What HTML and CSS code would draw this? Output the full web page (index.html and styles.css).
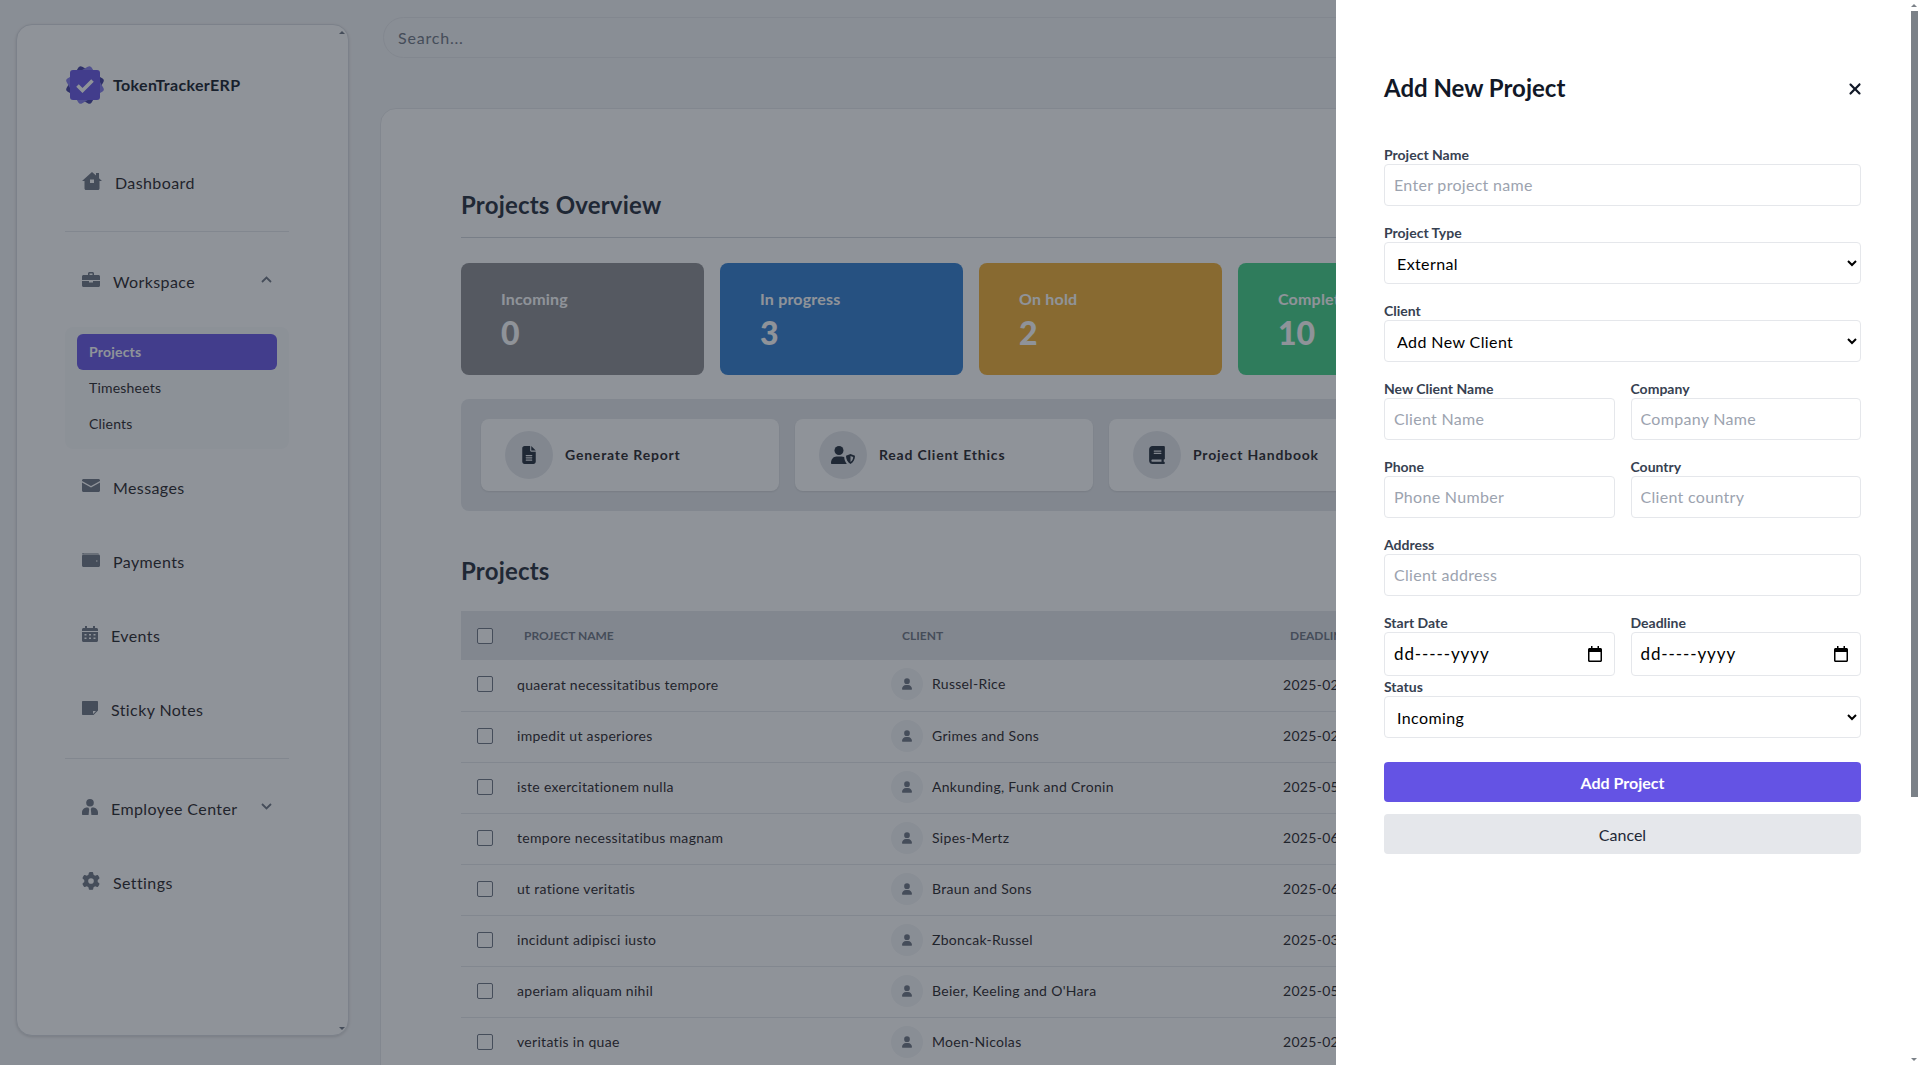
FILE: index.html
```html
<!DOCTYPE html>
<html lang="en">
<head>
  <meta charset="UTF-8" />
  <title>TokenTrackerERP - Projects</title>
  <link rel="stylesheet" href="styles.css">
</head>
<body>
  <svg class="defs" width="0" height="0">
    <symbol id="i-user" viewBox="0 0 448 512"><path d="M224 256A128 128 0 1 0 224 0a128 128 0 1 0 0 256zm-45.7 48C79.8 304 0 383.8 0 482.3C0 498.7 13.3 512 29.7 512H418.3c16.4 0 29.7-13.3 29.7-29.7C448 383.8 368.2 304 269.7 304H178.3z"/></symbol>
  </svg>

  <div class="app">
    <aside class="sidebar">
      <span class="bar-arrow bar-arrow-up"></span>
      <span class="bar-arrow bar-arrow-down"></span>

      <div class="logo">
        <svg class="logo-mark" width="40" height="40" viewBox="0 0 40 40">
          <rect x="5.500" y="5.500" width="29" height="29" rx="3" fill="#3f3a9e" transform="rotate(30 20 20)"/>
          <rect x="5.500" y="5.500" width="29" height="29" rx="3" fill="#8078ea" transform="rotate(60 20 20)"/>
          <rect x="5" y="5" width="30" height="30" rx="3" fill="#6453e4"/>
          <path d="M12.500 20.500l5 5 10-10" fill="none" stroke="#fff" stroke-width="3.600"/>
        </svg>
        <span class="logo-text">TokenTrackerERP</span>
      </div>

      <nav class="nav">
        <a class="nav-item" href="#">
          <svg width="20" height="18" viewBox="0 0 20 18"><path fill-rule="evenodd" d="M10 0l4 3.500V1h3v5.200L20 9h-2.500v7.500c0 .8-.7 1.500-1.500 1.500H4c-.8 0-1.500-.7-1.500-1.500V9H0zM8 7.500v3.500h4V7.500z"/></svg>
          <span>Dashboard</span>
        </a>
        <div class="nav-divider nav-divider-first"></div>
        <a class="nav-item" href="#">
          <svg width="18" height="15" viewBox="0 0 18 15"><path fill-rule="evenodd" d="M6 3V1.500C6 .7 6.700 0 7.500 0h3c.8 0 1.500.7 1.500 1.500V3h4.500c.8 0 1.500.7 1.500 1.500V8H0V4.500C0 3.700.7 3 1.500 3zM7.500 1.500V3h3V1.500z"/><path d="M0 9h7v1.500h4V9h7v4.500c0 .8-.7 1.500-1.500 1.500h-15C.7 15 0 14.300 0 13.500z"/></svg>
          <span>Workspace</span>
          <svg class="chevron" width="11" height="7" viewBox="0 0 11 7"><path d="M1 6l4.500-4.500L10 6" fill="none" stroke-width="1.800"/></svg>
        </a>
        <div class="subnav">
          <a class="subnav-item active" href="#">Projects</a>
          <a class="subnav-item" href="#">Timesheets</a>
          <a class="subnav-item" href="#">Clients</a>
        </div>
        <a class="nav-item" href="#">
          <svg width="18" height="13" viewBox="0 0 18 13"><path d="M1.500 0h15C17.300 0 18 .7 18 1.500v.5L9 7 0 2v-.5C0 .7.7 0 1.500 0z"/><path d="M0 3.500l9 5 9-5v8c0 .8-.7 1.500-1.500 1.500h-15C.7 13 0 12.300 0 11.500z"/></svg>
          <span>Messages</span>
        </a>
        <a class="nav-item" href="#">
          <svg width="18" height="14" viewBox="0 0 18 14"><path d="M2 0h14c.6 0 1 .2 1 .6H2C1.400.6 1 .8 1 1.200H0C0 .4.900 0 2 0z"/><path fill-rule="evenodd" d="M1.500 1.500H16.500c.8 0 1.500.7 1.500 1.500v9.500c0 .8-.7 1.500-1.500 1.500h-15C.7 14 0 13.300 0 12.500V3c0-.8.7-1.500 1.500-1.500zM14 7.500v1h1.500v-1z"/></svg>
          <span>Payments</span>
        </a>
        <a class="nav-item" href="#">
          <svg width="16" height="16" viewBox="0 0 16 16"><path d="M3 0h2v2h6V0h2v2h1.500c.8 0 1.500.7 1.500 1.500V5H0V3.500C0 2.700.7 2 1.500 2H3z"/><path fill-rule="evenodd" d="M0 6h16v8.500c0 .8-.7 1.500-1.500 1.500h-13C.7 16 0 15.300 0 14.500zM2.500 8v1.500h2V8zM7 8v1.500h2V8zM11.500 8v1.500h2V8zM2.500 11.500V13h2v-1.500zM7 11.500V13h2v-1.500zM11.500 11.500V13h2v-1.500z"/></svg>
          <span>Events</span>
        </a>
        <a class="nav-item" href="#">
          <svg width="16" height="14" viewBox="0 0 16 14"><path fill-rule="evenodd" d="M1 0h14c.6 0 1 .4 1 1v8.500L11.500 14H1c-.6 0-1-.4-1-1V1c0-.6.4-1 1-1zM11 10v3l3-3z"/></svg>
          <span>Sticky Notes</span>
        </a>
        <div class="nav-divider"></div>
        <a class="nav-item" href="#">
          <svg width="16" height="16" viewBox="0 0 16 16"><circle cx="8" cy="3.800" r="3.800"/><path d="M5 8.500h1.200L7.200 10 6.600 16H1c-.6 0-1-.4-1-1v-1.500C0 10.700 2.200 8.500 5 8.500zM9.800 8.500H11c2.800 0 5 2.200 5 5V15c0 .6-.4 1-1 1H9.400L8.800 10z"/></svg>
          <span>Employee Center</span>
          <svg class="chevron" width="11" height="7" viewBox="0 0 11 7"><path d="M1 1l4.500 4.500L10 1" fill="none" stroke-width="1.800"/></svg>
        </a>
        <a class="nav-item" href="#">
          <svg width="18" height="18" viewBox="0 0 512 512"><path d="M495.900 166.600c3.200 8.700 .5 18.400-6.400 24.600l-43.300 39.400c1.100 8.300 1.700 16.800 1.700 25.400s-.6 17.100-1.700 25.400l43.300 39.400c6.900 6.200 9.600 15.900 6.400 24.600c-4.400 11.900-9.700 23.300-15.800 34.300l-4.700 8.100c-6.600 11-14 21.400-22.100 31.200c-5.900 7.200-15.700 9.600-24.500 6.800l-55.700-17.700c-13.400 10.300-28.200 18.900-44 25.400l-12.500 57.100c-2 9.100-9 16.300-18.200 17.800c-13.800 2.300-28 3.500-42.500 3.500s-28.700-1.200-42.500-3.500c-9.200-1.500-16.200-8.700-18.200-17.800l-12.500-57.100c-15.800-6.500-30.600-15.100-44-25.400L83.100 425.900c-8.800 2.800-18.600 .3-24.500-6.800c-8.100-9.800-15.500-20.200-22.100-31.200l-4.700-8.100c-6.100-11-11.400-22.400-15.800-34.300c-3.200-8.700-.5-18.400 6.400-24.600l43.300-39.400C64.600 273.100 64 264.600 64 256s.6-17.100 1.700-25.400L22.400 191.200c-6.900-6.200-9.600-15.900-6.400-24.600c4.400-11.900 9.700-23.300 15.800-34.300l4.700-8.100c6.600-11 14-21.400 22.100-31.200c5.900-7.200 15.700-9.600 24.500-6.800l55.700 17.700c13.400-10.300 28.200-18.900 44-25.400l12.500-57.100c2-9.100 9-16.300 18.200-17.800C227.300 1.200 241.500 0 256 0s28.700 1.200 42.500 3.500c9.200 1.500 16.200 8.700 18.200 17.800l12.500 57.100c15.800 6.500 30.600 15.100 44 25.400l55.700-17.700c8.800-2.800 18.600-.3 24.500 6.800c8.100 9.800 15.500 20.200 22.100 31.200l4.700 8.100c6.100 11 11.400 22.400 15.800 34.300zM256 336a80 80 0 1 0 0-160 80 80 0 1 0 0 160z"/></svg>
          <span>Settings</span>
        </a>
      </nav>
    </aside>

    <main class="main">
      <input class="search" type="text" placeholder="Search...">

      <section class="content">
        <h1 class="overview-title">Projects Overview</h1>

        <div class="stats">
          <div class="stat stat-gray"><div class="stat-label">Incoming</div><div class="stat-value">0</div></div>
          <div class="stat stat-blue"><div class="stat-label">In progress</div><div class="stat-value">3</div></div>
          <div class="stat stat-amber"><div class="stat-label">On hold</div><div class="stat-value">2</div></div>
          <div class="stat stat-green"><div class="stat-label">Completed</div><div class="stat-value">10</div></div>
        </div>

        <div class="actions">
          <a class="action" href="#">
            <span class="action-icon"><svg width="14" height="18" viewBox="0 0 384 512"><path d="M64 0C28.700 0 0 28.700 0 64V448c0 35.300 28.700 64 64 64H320c35.300 0 64-28.700 64-64V160H256c-17.700 0-32-14.300-32-32V0H64zM256 0V128H384L256 0zM112 256H272c8.800 0 16 7.200 16 16s-7.200 16-16 16H112c-8.800 0-16-7.200-16-16s7.200-16 16-16zm0 64H272c8.800 0 16 7.200 16 16s-7.200 16-16 16H112c-8.800 0-16-7.200-16-16s7.200-16 16-16zm0 64H272c8.800 0 16 7.200 16 16s-7.200 16-16 16H112c-8.800 0-16-7.200-16-16s7.200-16 16-16z"/></svg></span>
            <span class="action-text">Generate Report</span>
          </a>
          <a class="action" href="#">
            <span class="action-icon"><svg width="24" height="18" viewBox="0 0 24 18"><circle cx="8" cy="4.500" r="4.500"/><path d="M5.500 10.500h5c1 0 1.900.2 2.700.6.200 2.600 1 4.900 2.600 6.900H1c-.6 0-1-.4-1-1 0-3.600 2.400-6.500 5.500-6.500z"/><path fill-rule="evenodd" d="M19.500 8l4.500 1.800c0 3.500-1.500 6.700-4.500 8.200-3-1.500-4.500-4.700-4.500-8.200zM19.500 10v6c1.700-1 2.600-3 2.700-5z"/></svg></span>
            <span class="action-text">Read Client Ethics</span>
          </a>
          <a class="action" href="#">
            <span class="action-icon"><svg width="16" height="18" viewBox="0 0 448 512"><path d="M96 0C43 0 0 43 0 96V416c0 53 43 96 96 96H384h32c17.700 0 32-14.300 32-32s-14.300-32-32-32V384c17.700 0 32-14.300 32-32V32c0-17.700-14.300-32-32-32H384 96zm0 384H352v64H96c-17.700 0-32-14.300-32-32s14.300-32 32-32zm32-240c0-8.800 7.200-16 16-16H336c8.800 0 16 7.200 16 16s-7.200 16-16 16H144c-8.800 0-16-7.200-16-16zm16 48H336c8.800 0 16 7.200 16 16s-7.200 16-16 16H144c-8.800 0-16-7.200-16-16s7.200-16 16-16z"/></svg></span>
            <span class="action-text">Project Handbook</span>
          </a>
        </div>

        <h2 class="table-title">Projects</h2>

        <table class="projects">
          <thead>
            <tr>
              <th class="col-check"><span class="check"></span></th>
              <th class="col-name">Project Name</th>
              <th class="col-client">Client</th>
              <th>Deadline</th>
            </tr>
          </thead>
          <tbody>
            <tr><td><span class="check"></span></td><td>quaerat necessitatibus tempore</td><td><div class="client"><span class="avatar"><svg width="10" height="12"><use href="#i-user"/></svg></span><span class="client-name">Russel-Rice</span></div></td><td>2025-02-11</td></tr>
            <tr><td><span class="check"></span></td><td>impedit ut asperiores</td><td><div class="client"><span class="avatar"><svg width="10" height="12"><use href="#i-user"/></svg></span><span class="client-name">Grimes and Sons</span></div></td><td>2025-02-20</td></tr>
            <tr><td><span class="check"></span></td><td>iste exercitationem nulla</td><td><div class="client"><span class="avatar"><svg width="10" height="12"><use href="#i-user"/></svg></span><span class="client-name">Ankunding, Funk and Cronin</span></div></td><td>2025-05-07</td></tr>
            <tr><td><span class="check"></span></td><td>tempore necessitatibus magnam</td><td><div class="client"><span class="avatar"><svg width="10" height="12"><use href="#i-user"/></svg></span><span class="client-name">Sipes-Mertz</span></div></td><td>2025-06-14</td></tr>
            <tr><td><span class="check"></span></td><td>ut ratione veritatis</td><td><div class="client"><span class="avatar"><svg width="10" height="12"><use href="#i-user"/></svg></span><span class="client-name">Braun and Sons</span></div></td><td>2025-06-23</td></tr>
            <tr><td><span class="check"></span></td><td>incidunt adipisci iusto</td><td><div class="client"><span class="avatar"><svg width="10" height="12"><use href="#i-user"/></svg></span><span class="client-name">Zboncak-Russel</span></div></td><td>2025-03-09</td></tr>
            <tr><td><span class="check"></span></td><td>aperiam aliquam nihil</td><td><div class="client"><span class="avatar"><svg width="10" height="12"><use href="#i-user"/></svg></span><span class="client-name">Beier, Keeling and O'Hara</span></div></td><td>2025-05-18</td></tr>
            <tr><td><span class="check"></span></td><td>veritatis in quae</td><td><div class="client"><span class="avatar"><svg width="10" height="12"><use href="#i-user"/></svg></span><span class="client-name">Moen-Nicolas</span></div></td><td>2025-02-27</td></tr>
          </tbody>
        </table>
      </section>
    </main>
  </div>

  <div class="overlay"></div>

  <aside class="drawer">
    <span class="drawer-thumb"></span>
    <span class="drawer-arrow drawer-arrow-up"></span>
    <span class="drawer-arrow drawer-arrow-down"></span>

    <header class="drawer-head">
      <h2 class="drawer-title">Add New Project</h2>
      <svg class="drawer-close" width="14" height="18" viewBox="0 0 384 512"><path d="M342.600 150.600c12.500-12.500 12.500-32.800 0-45.300s-32.800-12.500-45.300 0L192 210.700 86.600 105.400c-12.500-12.500-32.800-12.500-45.300 0s-12.500 32.800 0 45.300L146.700 256 41.400 361.400c-12.500 12.500-12.500 32.800 0 45.300s32.800 12.500 45.300 0L192 301.300 297.400 406.600c12.500 12.500 32.800 12.500 45.300 0s12.500-32.800 0-45.300L237.300 256 342.600 150.600z"/></svg>
    </header>

    <form class="form">
      <div class="field">
        <label>Project Name</label>
        <input type="text" placeholder="Enter project name">
      </div>
      <div class="field">
        <label>Project Type</label>
        <select><option>External</option><option>Internal</option></select>
      </div>
      <div class="field">
        <label>Client</label>
        <select><option>Add New Client</option></select>
      </div>
      <div class="field-row">
        <div class="field">
          <label>New Client Name</label>
          <input type="text" placeholder="Client Name">
        </div>
        <div class="field">
          <label>Company</label>
          <input type="text" placeholder="Company Name">
        </div>
      </div>
      <div class="field-row">
        <div class="field">
          <label>Phone</label>
          <input type="text" placeholder="Phone Number">
        </div>
        <div class="field">
          <label>Country</label>
          <input type="text" placeholder="Client country">
        </div>
      </div>
      <div class="field">
        <label>Address</label>
        <input type="text" placeholder="Client address">
      </div>
      <div class="field-row">
        <div class="field field-tight">
          <label>Start Date</label>
          <div class="date-input"><span>dd-----yyyy</span><svg width="14" height="16" viewBox="0 0 14 16"><path fill-rule="evenodd" d="M3 0h1.500v2h5V0H11v2h1.500c.8 0 1.500.7 1.500 1.500v11c0 .8-.7 1.500-1.500 1.500h-11C.7 16 0 15.300 0 14.500v-11C0 2.700.7 2 1.500 2H3zM1.500 6v8.500h11V6z"/></svg></div>
        </div>
        <div class="field field-tight">
          <label>Deadline</label>
          <div class="date-input"><span>dd-----yyyy</span><svg width="14" height="16" viewBox="0 0 14 16"><path fill-rule="evenodd" d="M3 0h1.500v2h5V0H11v2h1.500c.8 0 1.500.7 1.500 1.500v11c0 .8-.7 1.500-1.500 1.500h-11C.7 16 0 15.300 0 14.500v-11C0 2.700.7 2 1.500 2H3zM1.500 6v8.500h11V6z"/></svg></div>
        </div>
      </div>
      <div class="field field-status">
        <label>Status</label>
        <select><option>Incoming</option></select>
      </div>
      <button class="btn btn-primary" type="button">Add Project</button>
      <button class="btn btn-cancel" type="button">Cancel</button>
    </form>
  </aside>
</body>
</html>
```

FILE: styles.css
```css
html, body {
  margin: 0;
  height: 100%;
  overflow: hidden;
  font-family: "Lato", "Noto Sans", sans-serif;
  background-color: #f3f4f6;
  color: #1f2024;
}

a {
  color: inherit;
  text-decoration: none;
}

.defs {
  position: absolute;
}

.app {
  display: flex;
  align-items: flex-start;
  padding-left: 16px;
  gap: 31px;
  height: 1065px;
}

/* sidebar */
.sidebar {
  position: relative;
  flex: none;
  width: 333px;
  height: 1012px;
  margin-top: 24px;
  padding: 40px 59px 0 48px;
  box-sizing: border-box;
  background-color: #fff;
  border: 1px solid #d8dbe0;
  border-radius: 16px;
  box-shadow: 0 1px 3px rgba(0, 0, 0, 0.15);
}

.bar-arrow {
  position: absolute;
  right: 3px;
  border-left: 3px solid transparent;
  border-right: 3px solid transparent;
}

.bar-arrow-up {
  top: 6px;
  border-bottom: 3px solid #6b7280;
}

.bar-arrow-down {
  bottom: 5px;
  border-top: 3px solid #6b7280;
}

.logo {
  display: flex;
  align-items: center;
  gap: 8px;
  height: 40px;
  margin-bottom: 41px;
}

.logo-text {
  padding-bottom: 1px;
  font-size: 16px;
  font-weight: 700;
  letter-spacing: 0.35px;
  color: #111827;
}

.nav {
  display: flex;
  flex-direction: column;
}

.nav-item {
  display: flex;
  align-items: center;
  gap: 13px;
  height: 74px;
  padding: 0 17px 2px;
  box-sizing: border-box;
  font-size: 16px;
  letter-spacing: 0.4px;
}

.nav-item svg {
  flex: none;
  margin-bottom: 3px;
  fill: #6b7280;
}

.nav-item .chevron {
  margin-left: auto;
  fill: none;
  stroke: #6b7280;
}

.nav-divider {
  height: 1px;
  margin: 11px 0 13px;
  background-color: #e5e7eb;
}

.subnav {
  display: flex;
  flex-direction: column;
  margin: 8px 0 2px;
  padding: 7px 12px;
  height: 122px;
  box-sizing: border-box;
  background-color: #f9fafb;
  border-radius: 8px;
}

.subnav-item {
  display: flex;
  align-items: center;
  height: 36px;
  padding: 0 12px 2px;
  box-sizing: border-box;
  font-size: 14px;
  letter-spacing: 0.2px;
  border-radius: 6px;
}

.subnav-item.active {
  background-color: #6453e4;
  color: #fff;
  font-weight: 700;
}

/* main area */
.main {
  flex: 1;
  min-width: 0;
  padding-top: 17px;
}

.search {
  display: block;
  width: 1200px;
  height: 41px;
  margin: 0 0 50px 3px;
  padding: 0 14px;
  box-sizing: border-box;
  font: inherit;
  font-size: 16px;
  letter-spacing: 0.8px;
  background-color: #f3f4f6;
  border: 1px solid #e5e7eb;
  border-radius: 21px;
}

.search::placeholder {
  color: #6b7280;
}

.content {
  width: 1520px;
  height: 1000px;
  padding: 80px 0 0 80px;
  box-sizing: border-box;
  background-color: #fff;
  border: 1px solid #e5e7eb;
  border-radius: 16px 0 0 0;
}

.overview-title {
  width: 1020px;
  margin: 0 0 25px;
  padding-bottom: 16px;
  font-size: 24px;
  line-height: 32px;
  font-weight: 700;
  letter-spacing: 0.2px;
  color: #1f2937;
  border-bottom: 1px solid #d1d5db;
}

.stats {
  display: grid;
  grid-template-columns: repeat(4, 243px);
  gap: 16px;
}

.stat {
  height: 112px;
  padding: 24px 40px 0;
  box-sizing: border-box;
  color: #fff;
  border-radius: 8px;
}

.stat-gray { background-color: #8b8b8f; }
.stat-blue { background-color: #2d7bcf; }
.stat-amber { background-color: #f1ad2f; }
.stat-green { background-color: #3fd185; }

.stat-label {
  font-size: 16px;
  line-height: 24px;
  font-weight: 700;
  letter-spacing: 0.2px;
}

.stat-value {
  margin-top: 2px;
  font-size: 32px;
  line-height: 40px;
  font-weight: 900;
}

.actions {
  display: flex;
  gap: 16px;
  width: 1020px;
  margin-top: 24px;
  padding: 20px;
  box-sizing: border-box;
  background-color: #e5e7eb;
  border-radius: 8px;
}

.action {
  display: flex;
  align-items: center;
  gap: 12px;
  width: 298px;
  height: 72px;
  padding-left: 24px;
  box-sizing: border-box;
  font-size: 14px;
  font-weight: 700;
  letter-spacing: 0.8px;
  background-color: #fff;
  border-radius: 8px;
  box-shadow: 0 1px 2px rgba(0, 0, 0, 0.1);
}

.action-text {
  padding-bottom: 2px;
}

.action-icon {
  display: flex;
  align-items: center;
  justify-content: center;
  width: 48px;
  height: 48px;
  background-color: #e5e7eb;
  border-radius: 50%;
}

.action-icon svg {
  fill: #1f2937;
}

.table-title {
  margin: 44px 0 24px;
  font-size: 24px;
  line-height: 32px;
  font-weight: 700;
  letter-spacing: 0.2px;
  color: #1f2937;
}

.projects {
  width: 1020px;
  table-layout: fixed;
  border-collapse: collapse;
  font-size: 14px;
}

.projects th {
  height: 49px;
  padding: 0 19px;
  font-size: 12px;
  font-weight: 700;
  text-transform: uppercase;
  text-align: left;
  color: #6b7280;
  background-color: #e5e7eb;
}

.projects td {
  height: 51px;
  padding: 0 12px 2px;
  box-sizing: border-box;
  letter-spacing: 0.3px;
  border-bottom: 1px solid #e5e7eb;
}

.projects .col-check {
  width: 44px;
  padding: 0;
}

.projects .col-name {
  width: 374px;
  box-sizing: border-box;
}

.projects .col-client {
  width: 392px;
  box-sizing: border-box;
  padding-left: 23px;
}

.projects td:first-child {
  padding: 0 0 2px;
}

.check {
  display: block;
  width: 14px;
  height: 14px;
  margin-left: 16px;
  background-color: #fff;
  border: 1px solid #6b7280;
  border-radius: 2px;
}

.client {
  display: flex;
  align-items: center;
  gap: 9px;
  height: 32px;
  font-size: 14px;
}

.client-name {
  padding-bottom: 1px;
}

.avatar {
  display: flex;
  align-items: center;
  justify-content: center;
  width: 32px;
  height: 32px;
  background-color: #f3f4f6;
  border-radius: 50%;
}

.avatar svg {
  fill: #6b7280;
}

/* dim layer and drawer */
.overlay {
  position: fixed;
  inset: 0;
  background-color: rgba(31, 40, 52, 0.5);
}

.drawer {
  position: fixed;
  top: 0;
  right: 0;
  bottom: 0;
  width: 584px;
  padding: 72px 59px 0 48px;
  box-sizing: border-box;
  background-color: #fff;
}

.drawer-thumb {
  position: absolute;
  top: 11px;
  right: 2px;
  width: 7px;
  height: 786px;
  background-color: #7b8188;
}

.drawer-arrow {
  position: absolute;
  right: 3px;
  border-left: 3px solid transparent;
  border-right: 3px solid transparent;
}

.drawer-arrow-up {
  top: 4px;
  border-bottom: 3px solid #7b8188;
}

.drawer-arrow-down {
  bottom: 4px;
  border-top: 3px solid #7b8188;
}

.drawer-head {
  display: flex;
  align-items: center;
  justify-content: space-between;
  height: 32px;
  margin-bottom: 40px;
}

.drawer-title {
  margin: 0;
  padding-bottom: 2px;
  font-size: 24px;
  font-weight: 700;
  color: #111827;
}

.drawer-close {
  margin: 2px -1px 0 0;
  fill: #111827;
}

.field {
  margin-bottom: 16px;
}

.field label {
  display: block;
  height: 20px;
  font-size: 14px;
  line-height: 22px;
  font-weight: 700;
  color: #374151;
}

.field input,
.field select {
  display: block;
  width: 100%;
  height: 42px;
  box-sizing: border-box;
  font: inherit;
  font-size: 16px;
  letter-spacing: 0.4px;
  color: #000;
  background-color: #fff;
  border: 1px solid #e5e7eb;
  border-radius: 4px;
}

.field input {
  padding: 0 8px 2px 9px;
  letter-spacing: 0.3px;
}

.field select {
  padding: 0 8px;
}

.field input::placeholder {
  color: #9ca3af;
}

.field-row {
  display: grid;
  grid-template-columns: 1fr 1fr;
  gap: 16px;
}

.field-tight {
  margin-bottom: 0;
}

.field-status {
  margin-bottom: 24px;
}

.date-input {
  display: flex;
  align-items: center;
  justify-content: space-between;
  height: 44px;
  padding: 0 12px 0 9px;
  box-sizing: border-box;
  font-size: 17px;
  letter-spacing: 0.9px;
  color: #000;
  border: 1px solid #e5e7eb;
  border-radius: 4px;
}

.date-input span {
  padding-bottom: 2px;
}

.btn {
  display: block;
  width: 100%;
  height: 40px;
  font: inherit;
  font-size: 16px;
  border: none;
  border-radius: 4px;
}

.btn-primary {
  margin-bottom: 12px;
  font-weight: 700;
  color: #fff;
  background-color: #6453e4;
}

.btn-cancel {
  color: #1f2937;
  background-color: #e5e7eb;
}
```
